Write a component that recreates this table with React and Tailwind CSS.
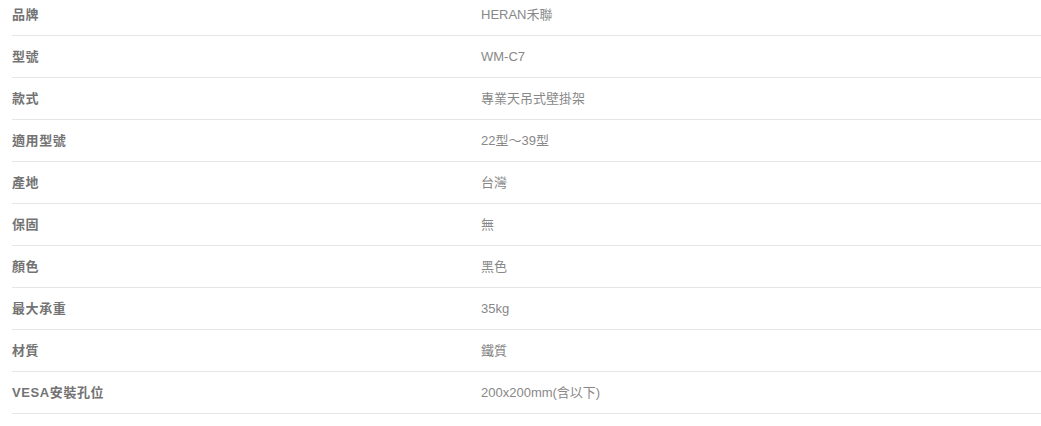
export default function App() {
  const rows = [
    ["品牌", "HERAN禾聯"],
    ["型號", "WM-C7"],
    ["款式", "專業天吊式壁掛架"],
    ["適用型號", "22型～39型"],
    ["產地", "台灣"],
    ["保固", "無"],
    ["顏色", "黑色"],
    ["最大承重", "35kg"],
    ["材質", "鐵質"],
    ["VESA安裝孔位", "200x200mm(含以下)"],
  ];
  return (
    <div
      className="w-[1041px] h-[426px] bg-white overflow-hidden pl-[12px]"
      style={{ fontFamily: '"Liberation Sans", Arial, "Noto Sans CJK TC", sans-serif' }}
    >
      <div className="-mt-[6px]">
        {rows.map(([k, v]) => (
          <div key={k} className="flex items-center h-[42px] border-b border-[#e6e6e6] text-[13px]">
            <div className="w-[469px] font-bold tracking-[0.6px] text-[#737373]">{k}</div>
            <div className="text-[#888888]">{v}</div>
          </div>
        ))}
      </div>
    </div>
  );
}
